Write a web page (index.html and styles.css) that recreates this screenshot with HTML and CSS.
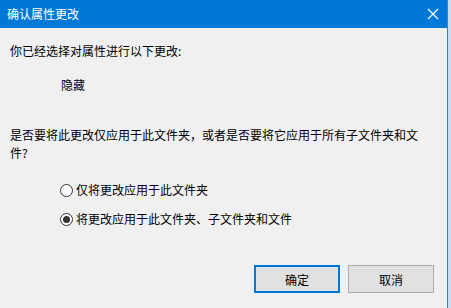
FILE: index.html
```html
<!DOCTYPE html>
<html lang="zh-CN">
<head>
<meta charset="utf-8">
<link rel="stylesheet" href="styles.css">
</head>
<body>
<div class="screen">
  <div class="dialog">
    <div class="titlebar">
      <span class="title">确认属性更改</span>
      <svg class="close" width="12" height="12" viewBox="0 0 12 12"><path d="M1 1L11 11M11 1L1 11" stroke="#fff" stroke-width="1.2" fill="none"/></svg>
    </div>
    <div class="content">
      <p class="intro">你已经选择对属性进行以下更改:</p>
      <p class="change">隐藏</p>
      <p class="question">是否要将此更改仅应用于此文件夹，或者是否要将它应用于所有子文件夹和文件?</p>
      <div class="options">
        <label class="option"><span class="radio"></span>仅将更改应用于此文件夹</label>
        <label class="option"><span class="radio checked"></span>将更改应用于此文件夹、子文件夹和文件</label>
      </div>
      <div class="buttons">
        <button class="btn primary">确定</button>
        <button class="btn">取消</button>
      </div>
    </div>
  </div>
  <div class="edge"></div>
</div>
</body>
</html>
```
FILE: styles.css
```css
* { box-sizing: border-box; }
html, body { margin: 0; padding: 0; }
body {
  width: 451px;
  height: 308px;
  overflow: hidden;
  font-family: "Noto Sans CJK SC", "Microsoft YaHei", sans-serif;
  font-size: 12px;
  color: #000;
  background: #cfdff0;
}
.screen { display: flex; height: 308px; }
.dialog {
  width: 448px;
  height: 308px;
  background: #f0f0f0;
  border-right: 1px solid #2b88d8;
  display: flex;
  flex-direction: column;
}
.edge { flex: 1; background: #c9dcf0; }
.titlebar {
  height: 28px;
  background: #0078d7;
  display: flex;
  align-items: center;
  justify-content: space-between;
  padding: 0 8px 0 7px;
  color: #fff;
}
.title { font-size: 12px; line-height: 16px; }
.close { display: block; }
.content {
  flex: 1;
  display: flex;
  flex-direction: column;
  padding: 0 12px 0 10px;
}
p { margin: 0; line-height: 18px; }
.intro { margin-top: 14px; }
.change { margin-top: 16px; padding-left: 51px; }
.question { margin-top: 32px; width: 420px; }
.options { display: flex; flex-direction: column; gap: 11px; margin-top: 19px; padding-left: 50px; }
.option { display: flex; align-items: center; gap: 3px; line-height: 18px; }
.radio {
  width: 13px; height: 13px;
  border: 1px solid #333;
  border-radius: 50%;
  background: #fff;
  display: flex; align-items: center; justify-content: center;
}
.radio.checked::after {
  content: "";
  width: 7px; height: 7px;
  border-radius: 50%;
  background: #333;
}
.buttons {
  display: flex;
  justify-content: flex-end;
  gap: 8px;
  margin-top: 37px;
  padding-right: 1px;
}
.btn {
  width: 86px; height: 28px;
  font-family: inherit; font-size: 12px; color: #000;
  background: #e1e1e1;
  border: 1px solid #adadad;
  padding: 0;
}
.btn.primary { border: 2px solid #0078d7; }
```
